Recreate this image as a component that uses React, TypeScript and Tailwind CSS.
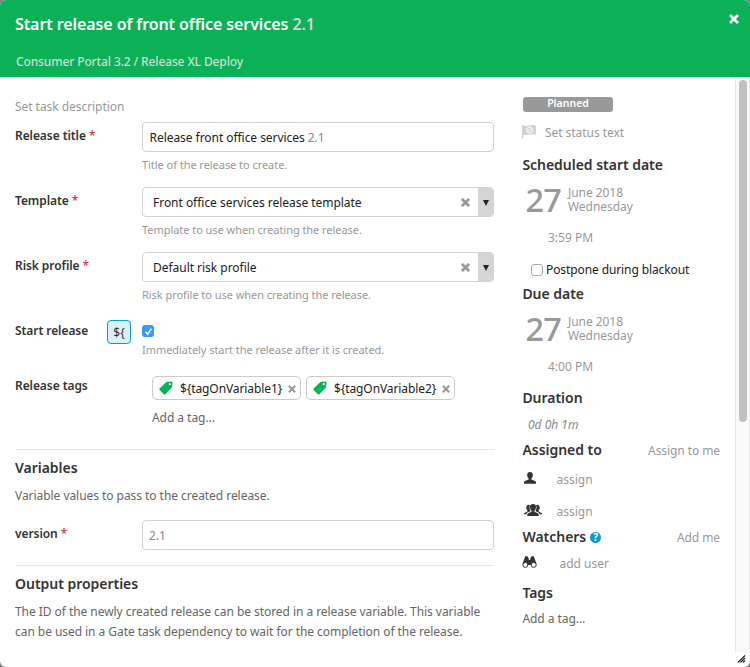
import React from "react";

type Kids = { children?: React.ReactNode };

const Required = () => <span className="text-[#d94343]"> *</span>;

function Cross({ className, thick = 3 }: { className: string; thick?: number }) {
  return (
    <svg viewBox="0 0 10 10" className={className} stroke="currentColor" strokeWidth={thick} fill="none">
      <path d="M1 1 9 9M9 1 1 9" />
    </svg>
  );
}

function TagIcon() {
  return (
    <svg viewBox="0 0 14 14" className="h-[14px] w-[14px] shrink-0 text-[#0ab156]">
      <path
        fill="currentColor"
        fillRule="evenodd"
        d="M7.4 1 12.4.6Q13.5.6 13.5 1.7L13.2 6.2 6.3 13.2Q5.6 13.8 4.9 13.2L.6 8.9Q0 8.2.6 7.5ZM10.8 2.1a1.1 1.1 0 1 0 .01 0Z"
      />
    </svg>
  );
}

function FlagIcon() {
  return (
    <svg viewBox="0 0 14 14" className="h-[14px] w-[14px] shrink-0">
      <path d="M0 0H1.2V14H0Z" fill="#d2d2d2" />
      <path d="M1 .4Q4 1.6 7 .6T14 .4V9.6Q10 8.8 7 9.6T1 9.8Z" fill="#d2d2d2" />
      <circle cx="7.6" cy="5" r="3" fill="none" stroke="#fff" strokeWidth="1" />
      <path d="M5.6 7 9.6 3" stroke="#fff" strokeWidth="1" />
    </svg>
  );
}

function UserIcon() {
  return (
    <svg viewBox="0 0 12 12" className="h-[12px] w-[12px]" fill="#333">
      <path d="M6 0C7.9 0 8.8 1.2 8.8 3 8.8 4.7 8.3 5.7 7.4 6.5V7.6L11 9.1Q12 9.6 12 10.5V11.7H0V10.5Q0 9.6 1 9.1L4.6 7.6V6.5C3.7 5.7 3.2 4.7 3.2 3 3.2 1.2 4.1 0 6 0Z" />
    </svg>
  );
}

function GroupIcon() {
  return (
    <svg viewBox="0 0 18 12" className="h-[12px] w-[18px]" fill="#333">
      <path d="M4.7 .8C5.3 .8 5.7 1 5.9 1.3 5.3 3.2 5.4 5.1 6.4 6.6V7.2L3.4 8.6Q2.6 9.1 2.5 10.2H0V9.3L3.4 7.6V6.4C1.7 4.9 1.9 .8 4.7 .8ZM13.3 .8C12.7 .8 12.3 1 12.1 1.3 12.7 3.2 12.6 5.1 11.6 6.6V7.2L14.6 8.6Q15.4 9.1 15.5 10.2H18V9.3L14.6 7.6V6.4C16.3 4.9 16.1 .8 13.3 .8Z" />
      <path d="M9 0C11.2 0 12 1.2 12 3 12 4.8 11.4 5.7 10.4 6.6V7.7L13.9 9.2Q14.7 9.7 14.7 10.7V12H3.3V10.7Q3.3 9.7 4.1 9.2L7.6 7.7V6.6C6.6 5.7 6 4.8 6 3 6 1.2 6.8 0 9 0Z" />
    </svg>
  );
}

function BinocularsIcon() {
  return (
    <svg viewBox="0 0 15 12" className="h-[12px] w-[15px]">
      <path
        fill="#333"
        d="M3.2.2H5.6L6 1.4 6.8 2.2V4H8.2V2.2L9 1.4 9.4.2H11.8L12.2 1.6 14.6 8Q12 5.8 9.8 7.6L9 9H6L5.2 7.6Q3 5.8.4 8L2.8 1.6Z"
      />
      <circle cx="3.3" cy="8.9" r="2.5" fill="#fff" stroke="#333" strokeWidth="1" />
      <circle cx="11.7" cy="8.9" r="2.5" fill="#fff" stroke="#333" strokeWidth="1" />
    </svg>
  );
}

const Label = ({ children }: Kids) => (
  <div className="w-[127px] shrink-0 pt-[4px] text-[12px] leading-5 font-semibold tracking-[-0.07px] text-[#333]">{children}</div>
);

const Help = ({ children }: Kids) => (
  <div className="mt-[3px] h-5 text-[11px] leading-5 tracking-[-0.045px] text-[#999]">{children}</div>
);

function Select({ value }: { value: string }) {
  return (
    <div className="flex h-[30px] items-center overflow-hidden rounded-[4px] border border-[#d2d2d2] pl-[10px] text-[12px] tracking-[-0.03px] text-[#222]">
      <span className="grow pt-px">{value}</span>
      <Cross className="mt-px mr-[8px] h-[9px] w-[9px] text-[#999]" />
      <span className="flex h-[30px] w-[15px] items-center justify-center bg-[#d4d4d4] pt-[2px]">
        <svg viewBox="0 0 6 6" className="h-[6px] w-[6px]">
          <path d="M0 0H6L3 6Z" fill="#222" />
        </svg>
      </span>
    </div>
  );
}

const Tag = ({ children }: Kids) => (
  <div className="flex h-6 w-[149px] items-center rounded-[5px] border border-[#ccc] pl-[6px] text-[12px] tracking-[-0.1px] text-[#222]">
    <TagIcon />
    <span className="ml-[7px] w-[104px] pt-px whitespace-nowrap">{children}</span>
    <Cross className="mt-px ml-[4px] h-[8px] w-[8px] shrink-0 text-[#999]" thick={2.6} />
  </div>
);

const Heading = ({ children }: Kids) => (
  <h3 className="text-[14px] leading-5 font-semibold tracking-[-0.03px] text-[#333]">{children}</h3>
);

function DateBlock({ time }: { time: string }) {
  return (
    <>
      <div className="mt-[10px] flex h-[30px] text-[#999]">
        <span className="w-[44px] pl-[3.5px] text-[32.5px] leading-[29px] font-medium tracking-[-0.9px]">27</span>
        <div className="pt-px pl-[2px] text-[12px] leading-[14px] tracking-[-0.05px]">
          <div>June 2018</div>
          <div>Wednesday</div>
        </div>
      </div>
      <div className="mt-[13px] pl-[26px] text-[12px] leading-5 text-[#999]">{time}</div>
    </>
  );
}

export default function App() {
  return (
    <div className="h-[667px] w-[750px] bg-[#808080] font-['Noto_Sans',sans-serif]">
      <div className="flex h-[667px] flex-col overflow-hidden rounded-[6px] bg-white">
        <header className="flex h-[77px] shrink-0 justify-between bg-[#0ab156] pl-[15px]">
          <div>
            <h1 className="pt-[12px] text-[16px] leading-6 font-semibold tracking-[-0.09px] text-white">
              Start release of front office services <span className="text-[#cfd6d2]">2.1</span>
            </h1>
            <div className="mt-[16px] pl-px text-[12px] leading-5 font-medium tracking-[-0.12px] text-[#ccdfd3]">
              Consumer Portal 3.2 / Release XL Deploy
            </div>
          </div>
          <Cross className="mt-[14px] mr-[11px] h-[10px] w-[10px] text-white" thick={2.6} />
        </header>

        <div className="flex h-[590px]">
          <main className="ml-[15px] w-[479px] shrink-0 pt-[20px]">
            <div className="text-[12px] leading-5 tracking-[-0.05px] text-[#999]">Set task description</div>

            <section className="mt-[5px] flex h-[65px]">
              <Label>Release title<Required /></Label>
              <div className="grow">
                <div className="flex h-[30px] items-center rounded-[4px] border border-[#d2d2d2] pt-px pl-[6.5px] text-[12px] tracking-[-0.05px] text-[#222]">
                  <span>Release front office services <span className="text-[#888]">2.1</span></span>
                </div>
                <Help>Title of the release to create.</Help>
              </div>
            </section>
            <section className="flex h-[65px]">
              <Label>Template<Required /></Label>
              <div className="grow">
                <Select value="Front office services release template" />
                <Help>Template to use when creating the release.</Help>
              </div>
            </section>
            <section className="flex h-[65px]">
              <Label>Risk profile<Required /></Label>
              <div className="grow">
                <Select value="Default risk profile" />
                <Help>Risk profile to use when creating the release.</Help>
              </div>
            </section>
            <section className="flex h-[55px]">
              <div className="flex w-[127px] shrink-0 pt-[3px]">
                <div className="-mt-[3px] w-[92px]"><Label>Start release</Label></div>
                <div className="flex h-6 w-6 items-center justify-center rounded-[4px] border border-[#0a9bcf] bg-[#d9f1f8] pt-px text-[12px] text-[#333]">
                  {"${"}
                </div>
              </div>
              <div className="pt-[8px]">
                <div className="flex h-3 w-3 items-center justify-center rounded-[3px] bg-[#3b99fc]">
                  <svg viewBox="0 0 10 10" className="h-[9px] w-[9px]" fill="none" stroke="#fff" strokeWidth="1.7">
                    <path d="M1.6 5.3 4 8 8.3 1.8" />
                  </svg>
                </div>
                <Help>Immediately start the release after it is created.</Help>
              </div>
            </section>
            <section className="flex h-[77px]">
              <Label>Release tags</Label>
              <div className="pt-[4px] pl-[10px]">
                <div className="flex gap-[5px]">
                  <Tag>{"${tagOnVariable1}"}</Tag>
                  <Tag>{"${tagOnVariable2}"}</Tag>
                </div>
                <div className="mt-[8px] text-[12px] leading-5 tracking-[-0.05px] text-[#666]">Add a tag...</div>
              </div>
            </section>

            <section className="h-[116px] border-t border-[#e8e8e8] pt-[8px]">
              <Heading>Variables</Heading>
              <p className="mt-[8px] text-[12px] leading-5 tracking-[-0.05px] text-[#666]">Variable values to pass to the created release.</p>
              <div className="mt-[14px] flex">
                <Label>version<Required /></Label>
                <div className="flex h-[30px] grow items-center rounded-[4px] border border-[#d2d2d2] pt-px pl-[6px] text-[12px] text-[#888]">2.1</div>
              </div>
            </section>
            <section className="border-t border-[#e8e8e8] pt-[8px]">
              <Heading>Output properties</Heading>
              <p className="mt-[8px] text-[12px] leading-5 tracking-[-0.055px] whitespace-nowrap text-[#666]">
                The ID of the newly created release can be stored in a release variable. This variable
                <br />
                can be used in a Gate task dependency to wait for the completion of the release.
              </p>
            </section>
          </main>

          <aside className="ml-[28px] w-[198px] shrink-0 pt-[20px]">
            <div className="ml-px h-[15px] w-[90px] rounded-[3px] bg-[#999] text-center text-[10.5px] leading-[13px] font-semibold text-white">
              Planned
            </div>
            <div className="mt-[10px] flex h-5 items-center text-[12px] text-[#999]">
              <FlagIcon />
              <span className="ml-[9px] pt-px tracking-[-0.05px]">Set status text</span>
            </div>
            <div className="mt-[13px] pl-[0.4px]"><Heading>Scheduled start date</Heading></div>
            <DateBlock time="3:59 PM" />
            <div className="mt-[12px] flex h-5 items-center pl-[9px] text-[12px] tracking-[-0.1px] text-[#222]">
              <span className="mr-[3px] h-3 w-3 rounded-[3px] border border-[#aaa] bg-white" />
              Postpone during blackout
            </div>
            <div className="mt-[4px] pl-[0.4px]"><Heading>Due date</Heading></div>
            <DateBlock time="4:00 PM" />
            <div className="mt-[11px] pl-[0.4px]"><Heading>Duration</Heading></div>
            <div className="mt-[7px] pl-[6px] text-[12px] leading-5 text-[#888] italic">0d 0h 1m</div>
            <div className="mt-[5px] flex h-5 justify-between pl-[0.4px]">
              <Heading>Assigned to</Heading>
              <span className="pt-px text-[12px] leading-5 tracking-[-0.08px] text-[#999]">Assign to me</span>
            </div>
            <div className="mt-[10px] flex h-5 items-center text-[12px] text-[#999]">
              <span className="w-[34.5px] pb-[4px] pl-[2px]"><UserIcon /></span>assign
            </div>
            <div className="mt-[12px] flex h-5 items-center text-[12px] text-[#999]">
              <span className="w-[34.5px] pb-[4px] pl-[2px]"><GroupIcon /></span>assign
            </div>
            <div className="mt-[5px] flex h-5 justify-between pl-[0.4px]">
              <div className="flex items-center">
                <Heading>Watchers</Heading>
                <span className="ml-[4px] flex h-[11px] w-[11px] items-center justify-center rounded-full bg-[#0a9bd3] text-[10px] leading-none font-bold text-white">?</span>
              </div>
              <span className="pt-px text-[12px] leading-5 tracking-[-0.08px] text-[#999]">Add me</span>
            </div>
            <div className="mt-[7px] flex h-5 items-center text-[12px] text-[#999]">
              <span className="w-[37.5px] pb-[4px]"><BinocularsIcon /></span>add user
            </div>
            <div className="mt-[9px] pl-[0.4px]"><Heading>Tags</Heading></div>
            <div className="mt-[6px] pl-[0.4px] text-[12px] leading-5 tracking-[-0.05px] text-[#666]">Add a tag...</div>
          </aside>

          <div className="ml-auto w-[15px] shrink-0">
            <div className="h-[575px] border-x border-[#e8e8e8] bg-[#fafafa] pt-[3px] pl-[3px]">
              <div className="h-[342px] w-[8px] rounded-full bg-[#c1c1c1]" />
            </div>
            <svg viewBox="0 0 15 15" className="h-[15px] w-[15px]" stroke="#222" strokeWidth="1.1">
              <path d="M3 10.5 10 3.5M5.5 10.5 10 6M8 10.5 10 8.5" />
            </svg>
          </div>
        </div>
      </div>
    </div>
  );
}
